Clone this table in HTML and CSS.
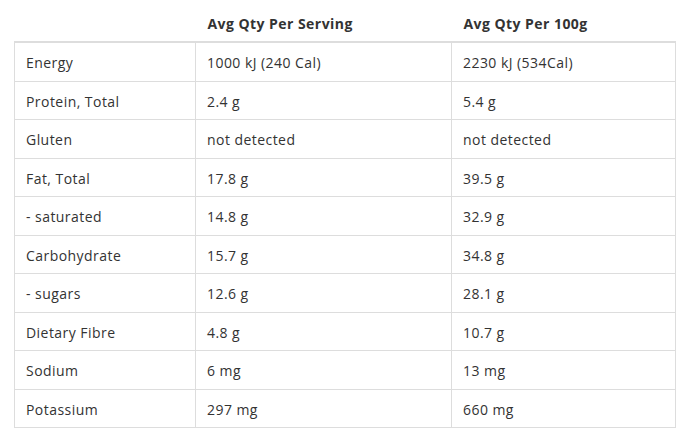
FILE: index.html
```html
<!DOCTYPE html>
<html>
<head>
<meta charset="utf-8">
<link rel="stylesheet" href="styles.css">
</head>
<body>
<div class="wrap">
<table class="nutri">
<thead>
<tr><th class="c1"></th><th class="c2">Avg Qty Per Serving</th><th class="c3">Avg Qty Per 100g</th></tr>
</thead>
<tbody>
<tr><td>Energy</td><td>1000 kJ (240 Cal)</td><td>2230 kJ (534Cal)</td></tr>
<tr><td>Protein, Total</td><td>2.4 g</td><td>5.4 g</td></tr>
<tr><td>Gluten</td><td>not detected</td><td>not detected</td></tr>
<tr><td>Fat, Total</td><td>17.8 g</td><td>39.5 g</td></tr>
<tr><td>- saturated</td><td>14.8 g</td><td>32.9 g</td></tr>
<tr><td>Carbohydrate</td><td>15.7 g</td><td>34.8 g</td></tr>
<tr><td>- sugars</td><td>12.6 g</td><td>28.1 g</td></tr>
<tr><td>Dietary Fibre</td><td>4.8 g</td><td>10.7 g</td></tr>
<tr><td>Sodium</td><td>6 mg</td><td>13 mg</td></tr>
<tr><td>Potassium</td><td>297 mg</td><td>660 mg</td></tr>
</tbody>
</table>
</div>
</body>
</html>
```
FILE: styles.css
```css
html, body {
  margin: 0;
  padding: 0;
  background: #fff;
}
body {
  font-family: "Open Sans", "DejaVu Sans", sans-serif;
  font-size: 14px;
  letter-spacing: 0.45px;
  color: #333;
}
.wrap {
  padding: 8px 0 0 14px;
}
.nutri {
  border-collapse: collapse;
  width: 661px;
  table-layout: fixed;
}
.nutri th,
.nutri td {
  box-sizing: border-box;
}
.nutri th {
  text-align: left;
  font-weight: 700;
  padding: 6px 12px 7px;
  line-height: 20px;
  border-bottom: 2px solid #ddd;
}
.nutri .c1 { width: 181px; }
.nutri .c2 { width: 256px; }
.nutri .c3 { width: 224px; }
.nutri td {
  border: 1px solid #ddd;
  padding: 10px 12px 8px 11px;
  line-height: 19.5px;
  vertical-align: top;
}
```
